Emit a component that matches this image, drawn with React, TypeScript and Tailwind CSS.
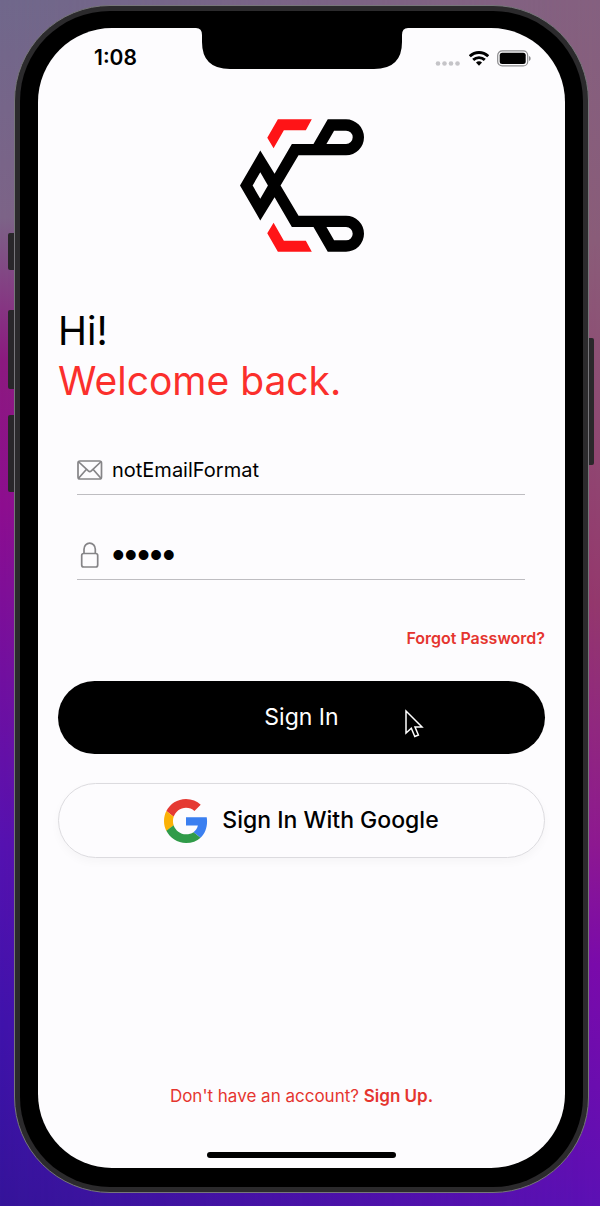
import { useState } from "react";

function Logo() {
  return (
    <svg viewBox="59 58 373 398" className="h-[133px] w-[124px]" role="img" aria-label="Logo">
      <path
        fillRule="evenodd"
        fill="#000"
        d="M59 257 120 152 163 222 215 132H280L323 58H378A54 54 0 0 1 378 166H235L181 257 235 348H378A54 54 0 0 1 378 456H323L280 382H215L163 292 120 362ZM97 257 120 297 143 257 120 217ZM342 92 319 132H378A20 20 0 0 0 378 92ZM319 382 342 422H378A20 20 0 0 0 378 382Z"
      />
      <path fill="#ff1417" d="M173 58H275L257 91H191L160 145 141 113ZM173 456H275L257 423H191L160 369 141 401Z" />
    </svg>
  );
}

function StatusBar() {
  return (
    <header className="flex h-[60px] items-center justify-between pr-[34px] pl-[56px]">
      <span className="text-[21px] font-semibold">1:08</span>
      <div className="flex items-center gap-2">
        <svg viewBox="0 0 26 15" className="h-[15px] w-[26px]" fill="#c5c4c8" aria-hidden="true">
          <circle cx="3" cy="12.500" r="2.300" />
          <circle cx="9.500" cy="12.500" r="2.300" />
          <circle cx="16" cy="12.500" r="2.300" />
          <circle cx="22.500" cy="12.500" r="2.300" />
        </svg>
        <svg viewBox="0 0 20 15" className="h-[15px] w-5" fill="none" stroke="#000" strokeWidth="2.900" aria-hidden="true">
          <path d="M0.800 5.300C6 0.300 14 0.300 19.200 5.300" />
          <path d="M4.200 8.900C7.500 5.800 12.500 5.800 15.800 8.900" />
          <path d="M7 11.600C8.600 9.900 11.400 9.900 13 11.600L10 14.800Z" fill="#000" stroke="none" />
        </svg>
        <svg viewBox="0 0 34 17" className="h-[17px] w-[34px]" aria-hidden="true">
          <rect x="0.700" y="0.900" width="30" height="15" rx="4.500" fill="none" stroke="#8b8b8d" strokeWidth="1.200" />
          <rect x="2.700" y="2.800" width="26" height="11.200" rx="2.500" />
          <path d="M32 6V11C34.200 10 34.200 7 32 6Z" fill="#8b8b8d" />
        </svg>
      </div>
    </header>
  );
}

function MailIcon() {
  return (
    <svg viewBox="0 0 26 20" className="h-5 w-[26px]" fill="none" stroke="#858487" strokeWidth="1.700" strokeLinejoin="round" aria-hidden="true">
      <rect x="1" y="1" width="23.500" height="18" rx="2" />
      <path d="M1.800 2 11.300 10.900Q12.800 12.200 14.300 10.900L23.700 2M1.800 18 9.500 9.300M23.700 18 16 9.300" />
    </svg>
  );
}

function LockIcon() {
  return (
    <svg viewBox="0 0 26 26" className="h-[26px] w-[26px]" fill="none" stroke="#858487" strokeWidth="1.700" aria-hidden="true">
      <rect x="4.700" y="11.500" width="16" height="13.500" rx="2" />
      <path d="M7 11.500V7.200A5.600 6 0 0 1 18.300 7.200V11.500" />
    </svg>
  );
}

function GoogleIcon() {
  return (
    <svg viewBox="0 0 48 48" className="h-11 w-11" aria-hidden="true">
      <path fill="#e53a33" d="M24 9.500c3.540 0 6.710 1.220 9.210 3.600l6.850-6.850C35.900 2.380 30.470 0 24 0 14.620 0 6.510 5.380 2.560 13.220l7.980 6.190C12.430 13.720 17.740 9.500 24 9.500z" />
      <path fill="#3b7ff0" d="M46.980 24.550c0-1.570-.15-3.090-.38-4.550H24v9.020h12.940c-.58 2.960-2.260 5.480-4.780 7.180l7.730 6c4.510-4.180 7.090-10.360 7.090-17.650z" />
      <path fill="#fbb106" d="M10.530 28.590c-.48-1.450-.76-2.990-.76-4.590s.27-3.140.76-4.590l-7.980-6.190C.92 16.460 0 20.120 0 24c0 3.880.92 7.540 2.560 10.780l7.970-6.190z" />
      <path fill="#309b49" d="M24 48c6.480 0 11.930-2.130 15.890-5.810l-7.730-6c-2.150 1.450-4.920 2.300-8.160 2.300-6.260 0-11.570-4.220-13.470-9.910l-7.980 6.190C6.510 42.620 14.620 48 24 48z" />
    </svg>
  );
}

export default function App() {
  const [email, setEmail] = useState("notEmailFormat");
  const [password, setPassword] = useState("12345");

  return (
    <div className="relative min-h-screen bg-linear-[180deg,#70688c_0%,#7c6488_18%,#8c1a80_30%,#8d0e90_42%,#5512b0_70%,#4013ab_85%,#35149a_100%] pt-[5px] pr-[11px] pb-[13px] pl-[14px] font-['Inter',sans-serif]">
      <div className="absolute inset-0 bg-linear-[180deg,#85607f_0%,#8a5c78_20%,#94386c_50%,#8e1890_70%,#7a0aaa_80%,#5c10b4_100%] mask-l-from-0% mask-l-to-100%" />

      <div className="relative rounded-[96px] border border-[#77767a] bg-[#2b2a2c] p-[5px]">
        <div className="absolute top-[227px] -left-[7px] h-[37px] w-[6px] rounded-l-xs bg-[#29272a]" />
        <div className="absolute top-[304px] -left-[7px] h-[79px] w-[6px] rounded-l-xs bg-[#29272a]" />
        <div className="absolute top-[409px] -left-[7px] h-[77px] w-[6px] rounded-l-xs bg-[#29272a]" />
        <div className="absolute top-[332px] -right-[6px] h-[127px] w-[5px] rounded-r-xs bg-[#29272a]" />

        <div className="rounded-[90px] bg-black px-[18px] pt-[17px] pb-[19px]">
          <main className="relative flex min-h-[1140px] flex-col rounded-[74px] bg-[#fdfcfe] text-black">
            <div className="absolute top-0 left-1/2 flex -translate-x-1/2">
              <svg viewBox="0 0 212 42" className="h-[42px] w-[212px]" aria-hidden="true">
                <path d="M0 0H212Q206 0 206 7V14Q206 41 178 41H34Q6 41 6 14V7Q6 0 0 0Z" />
              </svg>
            </div>
            <StatusBar />

            <div className="flex flex-1 flex-col px-5 pb-[10px]">
              <div className="flex justify-center pt-[31px]">
                <Logo />
              </div>

              <h1 className="mt-[54px] text-[39px] leading-[50px]">
                Hi!
                <span className="block text-[#fb2f2c]">Welcome back.</span>
              </h1>

              <form onSubmit={(e) => e.preventDefault()}>
                <div className="mt-[40px] mr-5 ml-[19px]">
                  <label className="flex h-[49px] items-center gap-[9px] border-b border-[#bebdc1]">
                    <MailIcon />
                    <input
                      type="text"
                      aria-label="Email"
                      value={email}
                      onChange={(e) => setEmail(e.target.value)}
                      className="min-w-0 flex-1 bg-transparent text-xl outline-none"
                    />
                  </label>
                  <label className="mt-9 flex h-[49px] items-center gap-[9px] border-b border-[#bebdc1]">
                    <LockIcon />
                    <input
                      type="password"
                      aria-label="Password"
                      value={password}
                      onChange={(e) => setPassword(e.target.value)}
                      className="h-10 min-w-0 flex-1 bg-transparent font-['Liberation_Sans',sans-serif] text-4xl outline-none"
                    />
                  </label>
                </div>

                <div className="mt-[46px] flex justify-end">
                  <a href="#forgot" className="text-base leading-6 font-semibold text-[#e5352f]">
                    Forgot Password?
                  </a>
                </div>

                <button type="submit" className="relative mt-[31px] h-[73px] w-full rounded-full bg-black text-[23px] text-white">
                  Sign In
                  <svg viewBox="0 0 20 30" className="absolute top-[28px] right-[121px] h-[30px] w-5" fill="#000" stroke="#fff" strokeWidth="1.500" aria-hidden="true">
                    <path d="M2 2V24L7.300 19.300 10.800 27.500 14.400 26 11 18H18Z" />
                  </svg>
                </button>
                <button
                  type="button"
                  className="mt-[29px] flex h-[75px] w-full items-center justify-center gap-[14px] rounded-full border border-[#dcdbdf] text-[23px] font-medium shadow-[0_4px_10px_rgba(0,0,0,0.03)]"
                >
                  <GoogleIcon />
                  Sign In With Google
                </button>
              </form>

              <p className="mt-auto text-center text-[17px] leading-6 text-[#e5352f]">
                Don't have an account?{" "}
                <a href="#signup" className="font-semibold">
                  Sign Up.
                </a>
              </p>
              <div className="mx-auto mt-11 h-[6px] w-[189px] rounded-full bg-black" />
            </div>
          </main>
        </div>
      </div>
    </div>
  );
}
